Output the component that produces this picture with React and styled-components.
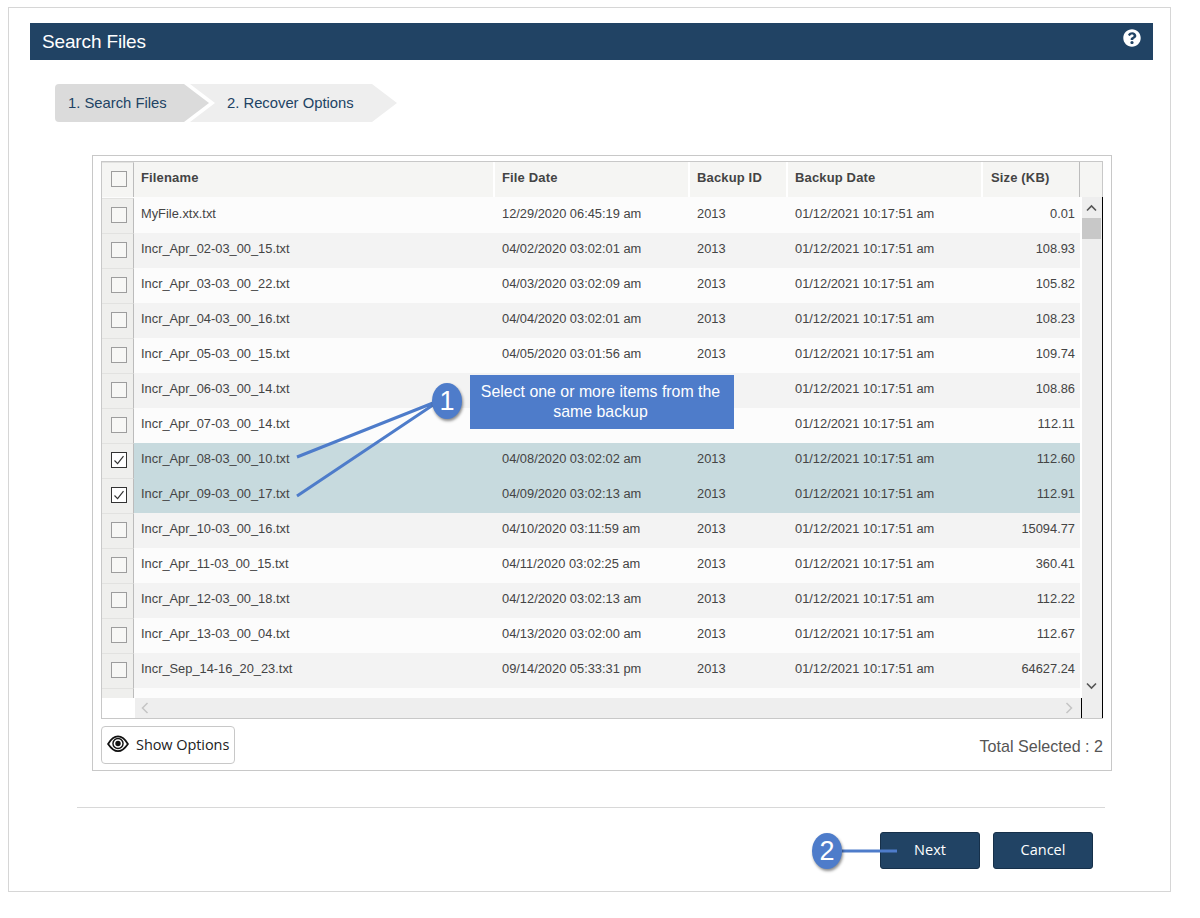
import React from 'react'
import styled, { createGlobalStyle } from 'styled-components'
import { FaQuestionCircle } from 'react-icons/fa'

const GlobalStyle = createGlobalStyle`
  html, body {
    margin: 0;
    padding: 0;
    background: #fff;
    font-family: "Liberation Sans", Arial, sans-serif;
  }
`

const COLUMNS = '32px 361px 195px 98px 195px 97px'

const rows = [
  ['MyFile.xtx.txt', '12/29/2020 06:45:19 am', '0.01'],
  ['Incr_Apr_02-03_00_15.txt', '04/02/2020 03:02:01 am', '108.93'],
  ['Incr_Apr_03-03_00_22.txt', '04/03/2020 03:02:09 am', '105.82'],
  ['Incr_Apr_04-03_00_16.txt', '04/04/2020 03:02:01 am', '108.23'],
  ['Incr_Apr_05-03_00_15.txt', '04/05/2020 03:01:56 am', '109.74'],
  ['Incr_Apr_06-03_00_14.txt', null, '108.86'],
  ['Incr_Apr_07-03_00_14.txt', null, '112.11'],
  ['Incr_Apr_08-03_00_10.txt', '04/08/2020 03:02:02 am', '112.60', true],
  ['Incr_Apr_09-03_00_17.txt', '04/09/2020 03:02:13 am', '112.91', true],
  ['Incr_Apr_10-03_00_16.txt', '04/10/2020 03:11:59 am', '15094.77'],
  ['Incr_Apr_11-03_00_15.txt', '04/11/2020 03:02:25 am', '360.41'],
  ['Incr_Apr_12-03_00_18.txt', '04/12/2020 03:02:13 am', '112.22'],
  ['Incr_Apr_13-03_00_04.txt', '04/13/2020 03:02:00 am', '112.67'],
  ['Incr_Sep_14-16_20_23.txt', '09/14/2020 05:33:31 pm', '64627.24'],
]

const Page = styled.div`
  position: relative;
  width: 1200px;
  height: 918px;
  overflow: hidden;
  padding: 7px 0 0 8px;
  box-sizing: border-box;
`

const Frame = styled.div`
  width: 1163px;
  height: 885px;
  box-sizing: border-box;
  border: 1px solid #d6d6d6;
  padding: 15px 17px 0 21px;
`

const TitleBar = styled.div`
  display: flex;
  justify-content: space-between;
  height: 37px;
  background: #214364;
  color: #fff;
  padding: 0 12px 0 12px;
`

const Title = styled.div`
  font-size: 19px;
  line-height: 37px;
  letter-spacing: -0.15px;
`

const HelpIcon = styled(FaQuestionCircle)`
  width: 18px;
  height: 18px;
  margin-top: 6px;
`

const Steps = styled.div`
  display: flex;
  margin: 24px 0 0 25px;
  height: 38px;
`

const Step = styled.div`
  height: 38px;
  width: ${p => p.$width}px;
  box-sizing: border-box;
  margin-right: ${p => p.$gap || 0}px;
  padding-left: ${p => p.$pad}px;
  background: ${p => p.$active ? '#dbdbdb' : '#eeeeee'};
  color: #214364;
  font-size: 14.8px;
  line-height: 38px;
  border-radius: ${p => p.$active ? '4px 0 0 4px' : '0'};
  clip-path: ${p => p.$clip};
`

const Panel = styled.div`
  width: 1020px;
  height: 616px;
  box-sizing: border-box;
  margin: 33px 0 0 62px;
  border: 1px solid #c8c8c8;
  padding: 5px 8px 0 8px;
`

const Grid = styled.div`
  position: relative;
  width: 1002px;
  height: 558px;
  box-sizing: border-box;
  border: 1px solid #c8c8c8;
  border-right: none;
  overflow: hidden;
`

const HeadRow = styled.div`
  display: grid;
  grid-template-columns: ${COLUMNS} 22px;
  height: 35px;
  background: #f5f5f3;
  border-right: 1px solid #c8c8c8;
`

const HeadCell = styled.div`
  color: #444;
  font-size: 13px;
  font-weight: bold;
  letter-spacing: 0.15px;
  line-height: 32px;
  padding-left: ${p => p.$pad || 7}px;
  border-left: 2px solid ${p => p.$bare ? 'transparent' : '#fff'};
  margin-left: -2px;
  white-space: nowrap;
`

const HeadEnd = styled.div`
  margin-left: -1px;
  border-left: 1px solid #bcbcbc;
`

const BoxCell = styled.div`
  display: flex;
  align-items: center;
  justify-content: center;
  box-sizing: border-box;
  padding-left: 2px;
  border-right: 1px solid #bcbcbc;
  border-top: 1px solid #e2e2e0;
  background: ${p => p.$plain ? 'transparent' : '#efefed'};
`

const Body = styled.div`
  display: flex;
  height: 521px;
`

const RowsArea = styled.div`
  width: 978px;
  height: 501px;
  box-sizing: border-box;
  padding-top: 1px;
  background: #fcfcfc;
  overflow: hidden;
`

const Row = styled.div`
  display: grid;
  grid-template-columns: ${COLUMNS};
  height: 35px;
  background: ${p => p.$selected ? '#c7dade' : p.$odd ? '#f3f3f3' : '#fcfcfc'};
  color: #444;
  font-size: 12.85px;
`

const Cell = styled.div`
  line-height: 31px;
  padding-left: 7px;
  white-space: nowrap;
`

const NumberCell = styled(Cell)`
  text-align: right;
  padding: 0 5px 0 0;
`

const Check = styled.span`
  display: block;
  width: 14px;
  height: 14px;
  margin-top: -2px;
  border: 1px solid ${p => p.$on ? '#333' : '#9d9d9d'};
  background: ${p => p.$on ? '#fff' : '#f7f7f5'};
  svg { display: block; }
`

const HeadCheck = styled(Check)`
  margin-top: -3px;
`

const VScroll = styled.div`
  position: relative;
  width: 21px;
  margin-left: 2px;
  height: 521px;
  box-sizing: border-box;
  background: #eeeeee;
  border-right: 1px solid #000;
  flex: none;
`

const Thumb = styled.div`
  height: 21px;
  width: 19px;
  margin-top: 21px;
  background: #c8c8c8;
`

const ScrollArrow = styled.svg`
  position: absolute;
  left: 4px;
  top: ${p => p.$top}px;
  width: 11px;
  height: 8px;
`

const HScroll = styled.div`
  position: absolute;
  left: 33px;
  bottom: 0;
  width: 947px;
  height: 20px;
  background: #eeeeee;
  border-right: 1px solid #000;
  box-sizing: border-box;
  display: flex;
  justify-content: space-between;
  align-items: center;
  padding: 0 8px 0 6px;
`

const PanelFooter = styled.div`
  display: flex;
  justify-content: space-between;
  margin-top: 7px;
`

const OptionsButton = styled.button`
  display: flex;
  align-items: center;
  gap: 7px;
  width: 134px;
  height: 38px;
  box-sizing: border-box;
  padding: 0 0 2px 5px;
  background: #fff;
  border: 1px solid #c8c8c8;
  border-radius: 4px;
  color: #222;
  font-family: "Open Sans", sans-serif;
  font-size: 14.5px;
  letter-spacing: -0.07px;
  svg { margin-top: -1px; }
`

const TotalText = styled.div`
  color: #555;
  font-size: 16.1px;
  line-height: 40px;
`

const Divider = styled.div`
  width: 1028px;
  height: 1px;
  margin: 36px 0 0 47px;
  background: #d8d8d8;
`

const Actions = styled.div`
  display: flex;
  justify-content: flex-end;
  gap: 13px;
  margin: 24px 60px 0 0;
`

const ActionButton = styled.button`
  width: 100px;
  height: 37px;
  box-sizing: border-box;
  padding: 0 0 2px;
  background: #214364;
  border: 1px solid #16304a;
  border-radius: 3px;
  color: #fff;
  font-family: "Open Sans", sans-serif;
  font-size: 14.5px;
`

const Callout = styled.div`
  position: absolute;
  left: 470px;
  top: 375px;
  width: 264px;
  height: 54px;
  box-sizing: border-box;
  padding: 7px 8px 0 5px;
  background: #4e7cca;
  color: #fff;
  font-size: 15.9px;
  line-height: 20px;
  text-align: center;
`

const Badge = styled.div`
  position: absolute;
  left: ${p => p.$left}px;
  top: ${p => p.$top}px;
  width: 30px;
  height: 36px;
  border-radius: 50%;
  background: #4e7cca;
  box-shadow: 1px 2px 3px rgba(0, 0, 0, 0.45);
  color: #fff;
  font-size: 27px;
  line-height: 36px;
  text-align: center;
`

const Leaders = styled.svg`
  position: absolute;
  left: 0;
  top: 0;
  width: 1200px;
  height: 918px;
  pointer-events: none;
`

const CheckBox = ({ on }) => (
  <Check $on={on}>
    {on && (
      <svg viewBox="0 0 14 14" width="14" height="14">
        <path d="M2.5 7.5 L5.6 10.6 L11.5 3.2" fill="none" stroke="#333" strokeWidth="1.2" />
      </svg>
    )}
  </Check>
)

const EyeIcon = () => (
  <svg viewBox="0 0 24 20" width="22" height="18">
    <path d="M1 10 C5 3 9 1.5 12 1.5 S19 3 23 10 C19 16 15 18 12 18 S5 16 1 10 Z" fill="none" stroke="#111" strokeWidth="2" />
    <circle cx="12" cy="9.5" r="5.6" fill="none" stroke="#111" strokeWidth="1.6" />
    <circle cx="12" cy="9.5" r="3" fill="#111" />
  </svg>
)

const App = () => (
  <Page>
    <GlobalStyle />
    <Frame>
      <TitleBar>
        <Title>Search Files</Title>
        <HelpIcon />
      </TitleBar>

      <Steps>
        <Step $active $width={154} $gap={-19} $pad={13} $clip="polygon(0 0, 129px 0, 154px 19px, 129px 38px, 0 38px)">1. Search Files</Step>
        <Step $width={207} $pad={37} $clip="polygon(0 0, 182px 0, 207px 19px, 182px 38px, 0 38px, 25px 19px)">2. Recover Options</Step>
      </Steps>

      <Panel>
        <Grid>
          <HeadRow>
            <BoxCell $plain><HeadCheck /></BoxCell>
            <HeadCell $bare>Filename</HeadCell>
            <HeadCell>File Date</HeadCell>
            <HeadCell>Backup ID</HeadCell>
            <HeadCell>Backup Date</HeadCell>
            <HeadCell $pad={8}>Size (KB)</HeadCell>
            <HeadEnd />
          </HeadRow>
          <Body>
            <RowsArea>
              {rows.map(([name, date, size, selected], i) => (
                <Row key={name} $odd={i % 2 === 1} $selected={selected}>
                  <BoxCell><CheckBox on={selected} /></BoxCell>
                  <Cell>{name}</Cell>
                  <Cell>{date}</Cell>
                  <Cell>{date && '2013'}</Cell>
                  <Cell>01/12/2021 10:17:51 am</Cell>
                  <NumberCell>{size}</NumberCell>
                </Row>
              ))}
              <Row><BoxCell /></Row>
            </RowsArea>
            <VScroll>
              <ScrollArrow $top={7} viewBox="0 0 11 8">
                <path d="M1 6.5 L5.5 2 L10 6.5" fill="none" stroke="#555" strokeWidth="1.6" />
              </ScrollArrow>
              <Thumb />
              <ScrollArrow $top={485} viewBox="0 0 11 8">
                <path d="M1 1.5 L5.5 6 L10 1.5" fill="none" stroke="#555" strokeWidth="1.6" />
              </ScrollArrow>
            </VScroll>
          </Body>
          <HScroll>
            <svg viewBox="0 0 8 12" width="8" height="12">
              <path d="M6.5 1 L1.5 6 L6.5 11" fill="none" stroke="#c4c4c4" strokeWidth="1.5" />
            </svg>
            <svg viewBox="0 0 8 12" width="8" height="12">
              <path d="M1.5 1 L6.5 6 L1.5 11" fill="none" stroke="#c4c4c4" strokeWidth="1.5" />
            </svg>
          </HScroll>
        </Grid>
        <PanelFooter>
          <OptionsButton><EyeIcon />Show Options</OptionsButton>
          <TotalText>Total Selected : 2</TotalText>
        </PanelFooter>
      </Panel>

      <Divider />
      <Actions>
        <ActionButton>Next</ActionButton>
        <ActionButton>Cancel</ActionButton>
      </Actions>
    </Frame>

    <Leaders viewBox="0 0 1200 918">
      <path d="M297 457 L433 403 M297 496 L433 405 M842 851 L897 851" fill="none" stroke="#4e7cca" strokeWidth="3" />
    </Leaders>
    <Callout>Select one or more items from the same backup</Callout>
    <Badge $left={432} $top={383}>1</Badge>
    <Badge $left={812} $top={833}>2</Badge>
  </Page>
)

export default App
